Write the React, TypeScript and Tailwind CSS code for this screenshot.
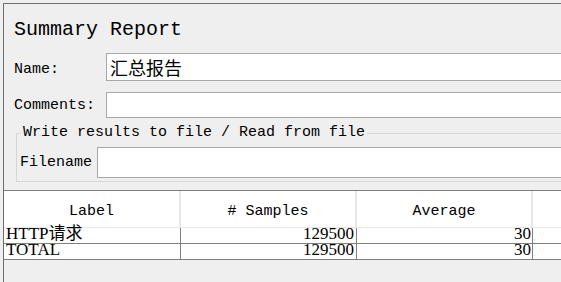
import React from 'react';

const rows = [
    { label: 'HTTP请求', samples: '129500', average: '30' },
    { label: 'TOTAL', samples: '129500', average: '30' },
];

const columns = ['Label', '# Samples', 'Average', ''];

export default function App() {
    return (
        <div className="w-[561px] h-[282px] overflow-hidden bg-[#efefef] pl-[3px] pt-[3px] font-['Liberation_Mono','Noto_Sans_CJK_SC',monospace] text-black">
            <div className="h-full w-[720px] border-l border-t border-[#6e6e6e] flex flex-col">
                {/* Title */}
                <div className="pl-[10px] mt-[13px] h-[26px] text-[20px] leading-[26px]">Summary Report</div>

                {/* Name */}
                <div className="flex items-center pl-[10px] mt-[10px]">
                    <div className="w-[92px] text-[15px] leading-[17px] pt-[4px]">Name:</div>
                    <input
                        readOnly
                        value="汇总报告"
                        className="flex-1 h-[28px] border border-[#a8a8a8] bg-white pl-[3px] text-[18px] font-['Noto_Sans_CJK_SC',sans-serif] outline-none"
                    />
                </div>

                {/* Comments */}
                <div className="flex items-center pl-[10px] mt-[11px]">
                    <div className="w-[92px] text-[15px] leading-[17px]">Comments:</div>
                    <input readOnly value="" className="flex-1 h-[26px] border border-[#a8a8a8] bg-white outline-none" />
                </div>

                {/* File panel */}
                <fieldset className="ml-[12px] mt-[6px] border border-[#d6d6d6]">
                    <legend className="ml-[4px] px-[2px] text-[15px] leading-[18px]">
                        Write results to file / Read from file
                    </legend>
                    <div className="flex items-center pl-[3px] mt-[5px] pb-[3px]">
                        <div className="w-[77px] text-[15px] leading-[17px]">Filename</div>
                        <input readOnly value="" className="flex-1 h-[31px] border border-[#a8a8a8] bg-white outline-none" />
                    </div>
                </fieldset>

                {/* Results table */}
                <div className="mt-[8px] border-t border-[#7f7f7f] bg-white">
                    <div className="grid grid-cols-[177px_176px_176px_1fr] h-[37px] border-b border-[#e8e8e8]">
                        {columns.map((c, i) => (
                            <div
                                key={i}
                                className="border-r-2 border-[#e6e6e6] text-center text-[15px] leading-[17px] pt-[5px] flex items-center justify-center"
                            >
                                {c}
                            </div>
                        ))}
                    </div>
                    {rows.map((r) => (
                        <div
                            key={r.label}
                            className="grid grid-cols-[177px_176px_176px_1fr] h-[16px] border-b border-[#7f7f7f] font-['Liberation_Serif','Noto_Sans_CJK_SC',serif] text-[17px] leading-[12px]"
                        >
                            <div className="border-r border-[#7f7f7f] pl-[2px] whitespace-nowrap">{r.label}</div>
                            <div className="border-r border-[#7f7f7f] pr-[2px] text-right">{r.samples}</div>
                            <div className="border-r border-[#7f7f7f] pr-[1px] text-right">{r.average}</div>
                            <div />
                        </div>
                    ))}
                </div>
            </div>
        </div>
    );
}
